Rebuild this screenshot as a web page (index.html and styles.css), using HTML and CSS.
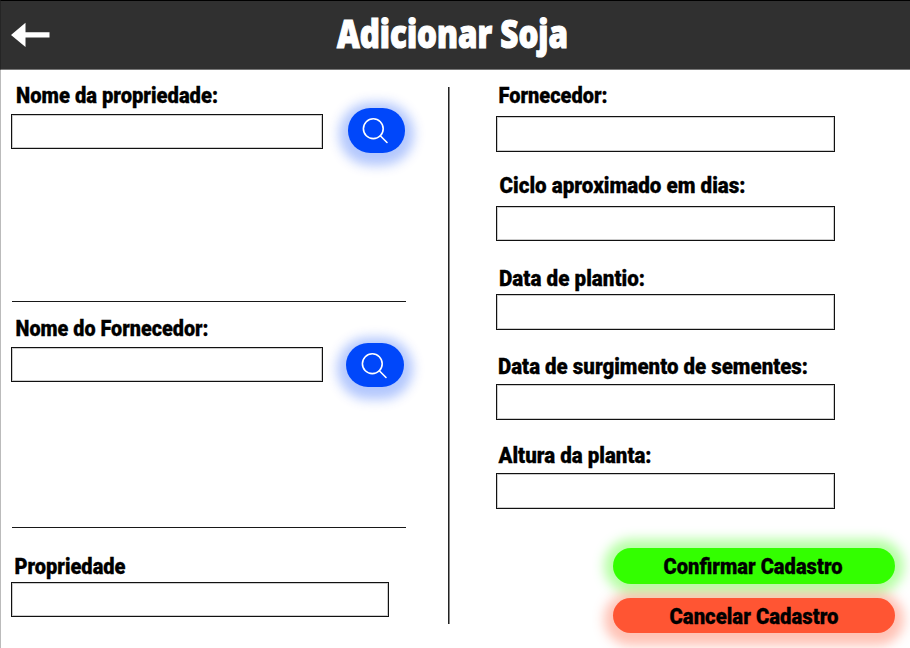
FILE: index.html
```html
<!DOCTYPE html>
<html lang="pt-BR">
<head>
<meta charset="utf-8">
<title>Adicionar Soja</title>
<link rel="stylesheet" href="styles.css">
</head>
<body>
<header class="topbar">
  <button class="back" aria-label="Voltar"><svg width="40" height="26" viewBox="0 0 40 26"><path d="M0 13 14.500 .8V10.300H38.500V15.600H14.500V25Z" fill="#fff"/></svg></button>
  <h1 class="title"><svg width="231" height="44"><text x="0" y="34.500" textLength="231" lengthAdjust="spacingAndGlyphs">Adicionar Soja</text></svg></h1>
</header>
<main class="content">
  <section class="left">
    <div class="search-group">
      <div class="field">
        <label class="label" for="f1"><svg width="202" height="28"><text x="5" y="20.300" textLength="202" lengthAdjust="spacingAndGlyphs">Nome da propriedade:</text></svg></label>
        <input id="f1" class="input">
      </div>
      <button class="search" aria-label="Pesquisar propriedade"><svg width="28" height="28" viewBox="0 0 28 28"><circle cx="11.300" cy="11.700" r="9.900"/><path d="M18.300 18.700 25 25.500"/></svg></button>
    </div>
    <div class="search-group second">
      <div class="field">
        <label class="label" for="f2"><svg width="193" height="28"><text x="4.500" y="20.300" textLength="193" lengthAdjust="spacingAndGlyphs">Nome do Fornecedor:</text></svg></label>
        <input id="f2" class="input">
      </div>
      <button class="search" aria-label="Pesquisar fornecedor"><svg width="28" height="28" viewBox="0 0 28 28"><circle cx="11.300" cy="11.700" r="9.900"/><path d="M18.300 18.700 25 25.500"/></svg></button>
    </div>
    <div class="field property">
      <label class="label" for="f3"><svg width="111" height="28"><text x="3.500" y="20" textLength="111" lengthAdjust="spacingAndGlyphs">Propriedade</text></svg></label>
      <input id="f3" class="input">
    </div>
  </section>
  <div class="divider"></div>
  <section class="right">
    <label class="label" for="f4"><svg width="109" height="28"><text x="2.500" y="20.300" textLength="109" lengthAdjust="spacingAndGlyphs">Fornecedor:</text></svg></label>
    <input id="f4" class="input">
    <label class="label" for="f5"><svg width="246" height="28"><text x="3.500" y="20" textLength="246" lengthAdjust="spacingAndGlyphs">Ciclo aproximado em dias:</text></svg></label>
    <input id="f5" class="input">
    <label class="label" for="f6"><svg width="146" height="28"><text x="3" y="20" textLength="146" lengthAdjust="spacingAndGlyphs">Data de plantio:</text></svg></label>
    <input id="f6" class="input">
    <label class="label" for="f7"><svg width="310" height="28"><text x="2" y="20.300" textLength="310" lengthAdjust="spacingAndGlyphs">Data de surgimento de sementes:</text></svg></label>
    <input id="f7" class="input">
    <label class="label" for="f8"><svg width="153" height="28"><text x="2.500" y="20.300" textLength="153" lengthAdjust="spacingAndGlyphs">Altura da planta:</text></svg></label>
    <input id="f8" class="input">
    <div class="actions">
      <button class="action confirm"><svg width="179" height="28"><text x="-1.500" y="21" textLength="179" lengthAdjust="spacingAndGlyphs">Confirmar Cadastro</text></svg></button>
      <button class="action cancel"><svg width="169" height="28"><text x="-0.500" y="21" textLength="169" lengthAdjust="spacingAndGlyphs">Cancelar Cadastro</text></svg></button>
    </div>
  </section>
</main>
</body>
</html>
```
FILE: styles.css
```css
* { box-sizing: border-box; }
body {
  margin: 0;
  width: 910px;
  height: 648px;
  overflow: hidden;
  background: #fff;
  color: #000;
  font-family: Roboto, "Liberation Sans", sans-serif;
}
svg { display: block; overflow: visible; }
button { border: 0; padding: 0; margin: 0; font: inherit; }
.topbar {
  display: grid;
  grid-template-columns: 326px 231px;
  height: 70px;
  background: #303030;
  border-top: 1px solid #000;
  border-bottom: 1px solid #777;
  border-left: 1px solid #252525;
}
.back { background: none; padding: 21px 0 0 10px; justify-self: start; align-self: start; }
.title { margin: 12px 0 0 10px; }
.title text { font: 800 38px "Open Sans", sans-serif; fill: #fff; stroke: #fff; stroke-width: 1.200px; }
.content {
  display: grid;
  grid-template-columns: 447px 2px 1fr;
  height: 578px;
  border-left: 1px solid #bbb;
}
.left {
  display: grid;
  grid-template-rows: 232px 226px 1fr;
  padding-left: 10px;
}
.search-group {
  display: grid;
  grid-template-columns: 312px 57.500px;
  column-gap: 24.500px;
  align-items: start;
  width: 394px;
  margin-left: 1px;
  border-bottom: 1px solid #181818;
}
.search-group .field { margin-left: -1px; }
.search-group .input { width: 312px; }
.label { display: block; height: 28px; }
.label text, .action text {
  font-weight: 900;
  font-size: 22.500px;
  fill: #000;
  stroke: #000;
  stroke-width: .3px;
}
.field { padding-top: 13px; }
.input {
  display: block;
  width: 100%;
  height: 35px;
  margin: 0;
  padding: 0 8px;
  border: 1px solid #111;
  border-radius: 0;
  box-shadow: inset 0 0 0 1px #ccc;
  background: #fff;
  font: 18px Roboto, sans-serif;
  outline: 0;
}
.field .input { margin-top: 3px; }
.second .field { padding-top: 14px; }
.search {
  display: grid;
  justify-content: center;
  width: 57.500px;
  height: 44.500px;
  margin-top: 38px;
  margin-left: -1px;
  padding-top: 8.500px;
  border-radius: 22.250px;
  background: #0047fa;
  box-shadow: 0 3.500px 12px 9px rgba(0, 71, 250, .3);
}
.search svg { fill: none; stroke: #fff; stroke-width: 1.600px; stroke-linecap: round; }
.second .search { margin-top: 41px; margin-left: -2.300px; height: 44px; }
.property { width: 378px; padding-top: 26px; }
.property .input { margin-top: 0; }
.divider { width: 1px; height: 537px; margin: 17px 0 0; background: #222; box-shadow: 1px 0 #888; }
.right {
  display: grid;
  grid-template-columns: 339px;
  grid-template-rows: 33px 57px 33px 60px 28px 60px 30px 59px 30px 75px 1fr;
  padding: 13px 0 0 46px;
  align-items: start;
}
.right .input { height: 36px; }
.right #f5 { height: 35px; }
.actions { display: grid; gap: 14px; width: 282px; margin-left: 117px; }
.action { display: grid; justify-content: center; height: 35.500px; padding-top: 5px; border-radius: 18px; }
.confirm { background: #3f0; box-shadow: 0 0 12px 9px rgba(51, 255, 0, .36); }
.cancel { background: #ff5533; box-shadow: 0 3.500px 12px 9px rgba(255, 85, 51, .36); }
```
